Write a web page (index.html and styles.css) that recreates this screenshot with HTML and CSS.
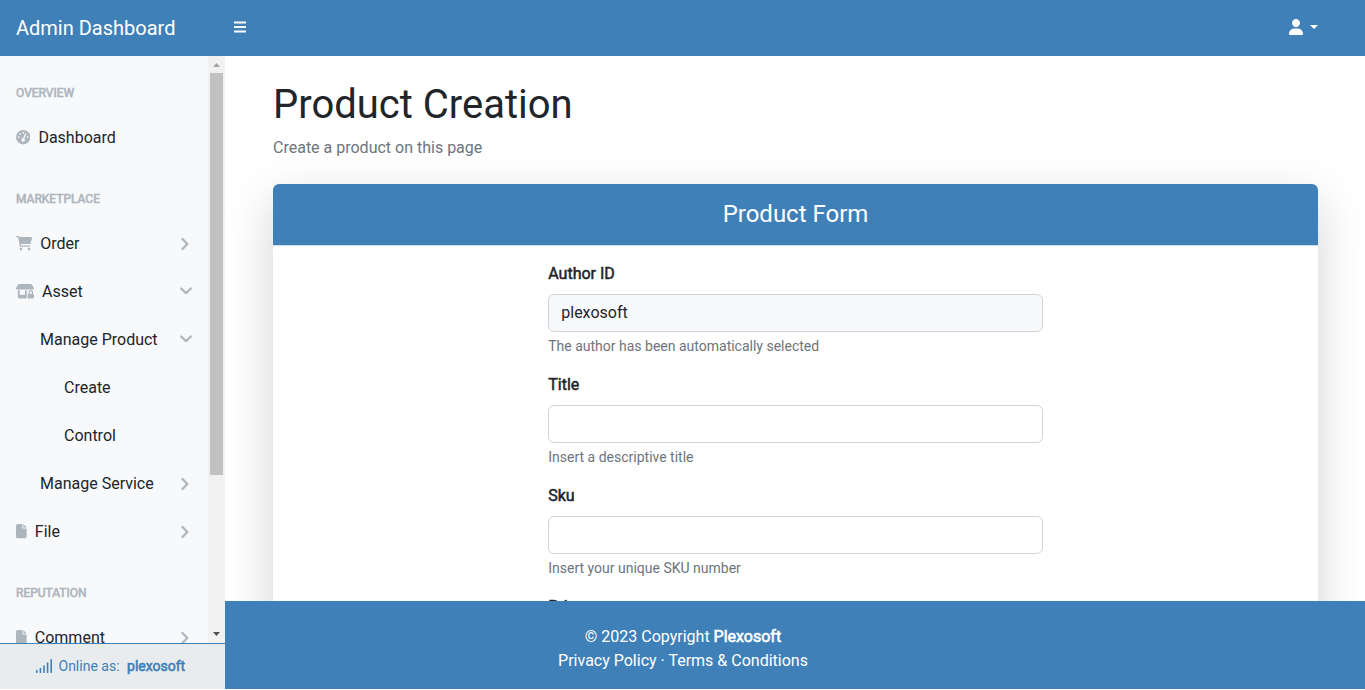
FILE: index.html
```html
<!DOCTYPE html>
<html lang="en">
<head>
<meta charset="utf-8">
<title>Product Creation</title>
<link rel="stylesheet" href="styles.css">
</head>
<body>
<svg class="defs" width="0" height="0">
  <symbol id="down" viewBox="0 0 12 8"><path d="M1.100 1.500l4.900 4.600 4.900-4.600" fill="none" stroke="currentColor" stroke-width="2.200" stroke-linecap="round" stroke-linejoin="round"/></symbol>
  <symbol id="right" viewBox="0 0 8 14"><path d="M1.500 1.900l4.800 5-4.800 5" fill="none" stroke="currentColor" stroke-width="2.200" stroke-linecap="round" stroke-linejoin="round"/></symbol>
  <symbol id="file" viewBox="0 0 384 512"><path fill="currentColor" d="M0 64C0 28.650 28.650 0 64 0H224V128C224 145.700 238.300 160 256 160H384V448C384 483.300 355.300 512 320 512H64C28.650 512 0 483.300 0 448V64zM256 128V0L384 128H256z"/></symbol>
</svg>
<nav class="topbar">
  <a class="brand">Admin Dashboard</a>
  <svg class="bars" viewBox="0 0 12 12"><path d="M.500 1.500h11M.500 6h11M.500 10.500h11" stroke="currentColor" stroke-width="1.800" stroke-linecap="round"/></svg>
  <div class="account">
    <svg class="user" viewBox="0 0 448 512"><path fill="currentColor" d="M224 256c70.700 0 128-57.310 128-128S294.700 0 224 0 96 57.310 96 128s57.300 128 128 128zM274.700 304H173.300C77.610 304 0 381.600 0 477.300 0 496.500 15.520 512 34.660 512h378.700c19.140 0 34.640-15.500 34.640-34.700 0-95.700-77.600-173.300-173.300-173.300z"/></svg>
    <span class="caret"></span>
  </div>
</nav>
<div class="shell">
  <aside class="sidebar">
    <div class="menu-wrap">
      <div class="menu">
        <div class="heading">Overview</div>
        <a class="link"><svg class="ico" viewBox="0 0 512 512"><path fill="currentColor" fill-rule="evenodd" d="M0 256a256 256 0 1 0 512 0A256 256 0 1 0 0 256zM256 64a32 32 0 1 1 0 64 32 32 0 1 1 0-64zM256 416c-35.300 0-64-28.700-64-64 0-36 27-62 58-64l75-167c5-12 20-17 32-12s17 20 12 32l-75 167c16 12 26 27 26 44 0 35.300-28.700 64-64 64zM144 112a32 32 0 1 1 0 64 32 32 0 1 1 0-64zM96 288a32 32 0 1 1 0-64 32 32 0 1 1 0 64zM416 224a32 32 0 1 1 0 64 32 32 0 1 1 0-64z"/></svg>Dashboard</a>
        <div class="heading">Marketplace</div>
        <a class="link"><svg class="ico i576" viewBox="0 0 576 512"><path fill="currentColor" d="M96 0C107.500 0 117.400 8.190 119.600 19.510L121.100 32H541.800C562.100 32 578.300 52.250 572.600 72.660L518.600 264.700C514.700 278.500 502.100 288 487.800 288H170.700L179.900 336H488C501.300 336 512 346.700 512 360S501.300 384 488 384H159.100C148.500 384 138.600 375.800 136.400 364.500L76.140 48H24C10.750 48 0 37.250 0 24S10.750 0 24 0H96zM128 464a48 48 0 1 1 96 0 48 48 0 1 1-96 0zM512 464a48 48 0 1 1-96 0 48 48 0 1 1 96 0z"/></svg>Order<svg class="arrow right"><use href="#right"/></svg></a>
        <a class="link"><svg class="ico i640" viewBox="0 0 640 512"><path fill="currentColor" d="M36.800 192H603.200c20.300 0 36.800-16.500 36.800-36.800 0-7.300-2.200-14.400-6.200-20.400L558.200 21.400C549.300 8 534.400 0 518.300 0H121.700c-16 0-31 8-39.900 21.400L6.200 134.700C2.200 140.800 0 147.900 0 155.200 0 175.500 16.500 192 36.800 192zM64 224v240c0 26.500 21.500 48 48 48h224c26.500 0 48-21.500 48-48V224h-64v160H128V224z"/><path fill="currentColor" fill-rule="evenodd" d="M528 212c-44.200 0-80 35.800-80 80v60c-17.700 0-32 14.300-32 32v96c0 17.700 14.300 32 32 32h160c17.700 0 32-14.300 32-32v-96c0-17.700-14.300-32-32-32v-60c0-44.200-35.800-80-80-80zm0 48c17.700 0 32 14.300 32 32v60h-64v-60c0-17.700 14.300-32 32-32z"/></svg>Asset<svg class="arrow down"><use href="#down"/></svg></a>
        <a class="link nested">Manage Product<svg class="arrow down"><use href="#down"/></svg></a>
        <a class="link nested deep">Create</a>
        <a class="link nested deep">Control</a>
        <a class="link nested">Manage Service<svg class="arrow right"><use href="#right"/></svg></a>
        <a class="link"><svg class="ico i384"><use href="#file"/></svg>File<svg class="arrow right"><use href="#right"/></svg></a>
        <div class="heading">Reputation</div>
        <a class="link"><svg class="ico i384"><use href="#file"/></svg>Comment<svg class="arrow right"><use href="#right"/></svg></a>
      </div>
      <div class="scroll">
        <svg class="tri" viewBox="0 0 17 17"><path d="M5 11l3.500-4L12 11z" fill="#a3a3a3"/></svg>
        <div class="thumb"></div>
        <svg class="tri" viewBox="0 0 17 17"><path d="M5 6l3.500 4L12 6z" fill="#505050"/></svg>
      </div>
    </div>
    <div class="status">
      <svg class="signal" viewBox="0 0 16 14"><path d="M.800 11.500V13.300M4.400 9.500v3.800M8 7v6.300M11.600 4v9.300M15.200.800v12.500" stroke="currentColor" stroke-width="1.600" stroke-linecap="round"/></svg>
      <span>Online as:</span><span class="strong">plexosoft</span>
    </div>
  </aside>
  <div class="content">
    <main class="page">
      <h1>Product Creation</h1>
      <p class="lead">Create a product on this page</p>
      <section class="card">
        <h3 class="card-head">Product Form</h3>
        <form class="form">
          <div class="field"><label>Author ID</label><input class="ro" value="plexosoft" readonly><small>The author has been automatically selected</small></div>
          <div class="field"><label>Title</label><input><small>Insert a descriptive title</small></div>
          <div class="field"><label>Sku</label><input><small>Insert your unique SKU number</small></div>
          <div class="field"><label>Price</label><input></div>
        </form>
      </section>
    </main>
    <footer class="footer">
      <div>© 2023 Copyright <span class="strong">Plexosoft</span></div>
      <div>Privacy Policy · Terms &amp; Conditions</div>
    </footer>
  </div>
</div>
</body>
</html>
```
FILE: styles.css
```css
* { box-sizing: border-box; }
body { margin: 0; height: 690px; overflow: hidden; background: #fff; color: #212529; font: 400 16px/24px Roboto, sans-serif; }
.defs { display: block; }
svg { flex: none; }
.topbar { display: flex; align-items: center; height: 56px; padding: 0 47px 0 16px; background: #4080b8; color: #fff; }
.brand { width: 218px; font-size: 20px; line-height: 30px; }
.bars { width: 12px; height: 12px; margin-top: -2px; }
.account { display: flex; align-items: center; gap: 7px; margin: -2px 0 0 auto; }
.user { width: 14px; height: 16px; }
.caret { border: 4px solid transparent; border-top-color: #fff; border-bottom: 0; }
.shell { display: flex; height: 633px; }
.sidebar { display: flex; flex-direction: column; width: 225px; background: #f8f9fa; }
.menu-wrap { display: flex; height: 587px; overflow: hidden; }
.menu { flex: 1; }
.heading { padding: 28px 16px 12px; font-size: 12px; line-height: 18px; text-transform: uppercase; color: #adb5bd; -webkit-text-stroke: .6px #adb5bd; }
.link { display: flex; align-items: center; height: 48px; padding: 0 16px; }
.nested { padding-left: 40px; }
.deep { padding-left: 64px; }
.ico { width: 14.4px; height: 14.4px; margin: 0 8px 1px 0; color: #adb5bd; }
.i576 { width: 16.2px; }
.i640 { width: 18px; }
.i384 { width: 10.8px; }
.arrow { margin-left: auto; color: #adb5bd; }
.down { width: 12px; height: 8px; margin-bottom: 2px; }
.right { width: 8px; height: 14px; margin-right: 3px; }
.scroll { display: flex; flex-direction: column; width: 17px; background: #f1f1f1; }
.thumb { height: 402px; margin: 0 2px auto; background: #c1c1c1; }
.tri { width: 17px; height: 17px; }
.status { display: flex; align-items: center; height: 46px; padding: 0 0 1px 36px; border-top: 1px solid #4080b8; background: #e9ecef; color: #4080b8; font-size: 14px; }
.status .strong { margin-left: 7.5px; }
.signal { width: 16px; height: 14px; margin-right: 6.5px; }
.strong { -webkit-text-stroke: .6px currentColor; }
.content { display: flex; flex-direction: column; width: 1140px; }
.page { height: 545px; padding: 25px 47px 0 48px; overflow: hidden; }
h1 { margin: 0 0 7px; font-size: 40px; line-height: 48px; font-weight: 400; }
.lead { margin: 0 0 24px; color: #6c757d; }
.card { border-radius: 6px; background: #fff; box-shadow: 0 16px 48px rgba(0,0,0,.175); }
.card-head { margin: 0; padding: 16px; border-bottom: 1px solid #d0dbe6; border-radius: 6px 6px 0 0; background: #4080b8; background-clip: padding-box; color: #fff; font-size: 24px; line-height: 29px; font-weight: 400; text-align: center; }
.form { width: 494.5px; margin: 0 auto; padding: 16px 0; }
.field { display: flex; flex-direction: column; margin-bottom: 16px; }
label { margin-bottom: 8px; -webkit-text-stroke: .5px currentColor; }
input { height: 38px; padding: 5px 12px 7px; border: 1px solid #ced4da; border-radius: 6px; background: #fff; color: #212529; font: inherit; }
.ro { background: #f8f9fa; }
small { margin-top: 4px; font-size: 14px; line-height: 21px; color: #6c757d; }
.footer { height: 88px; padding: 24px 224px 16px 0; background: #4080b8; color: #fff; text-align: center; }
```
